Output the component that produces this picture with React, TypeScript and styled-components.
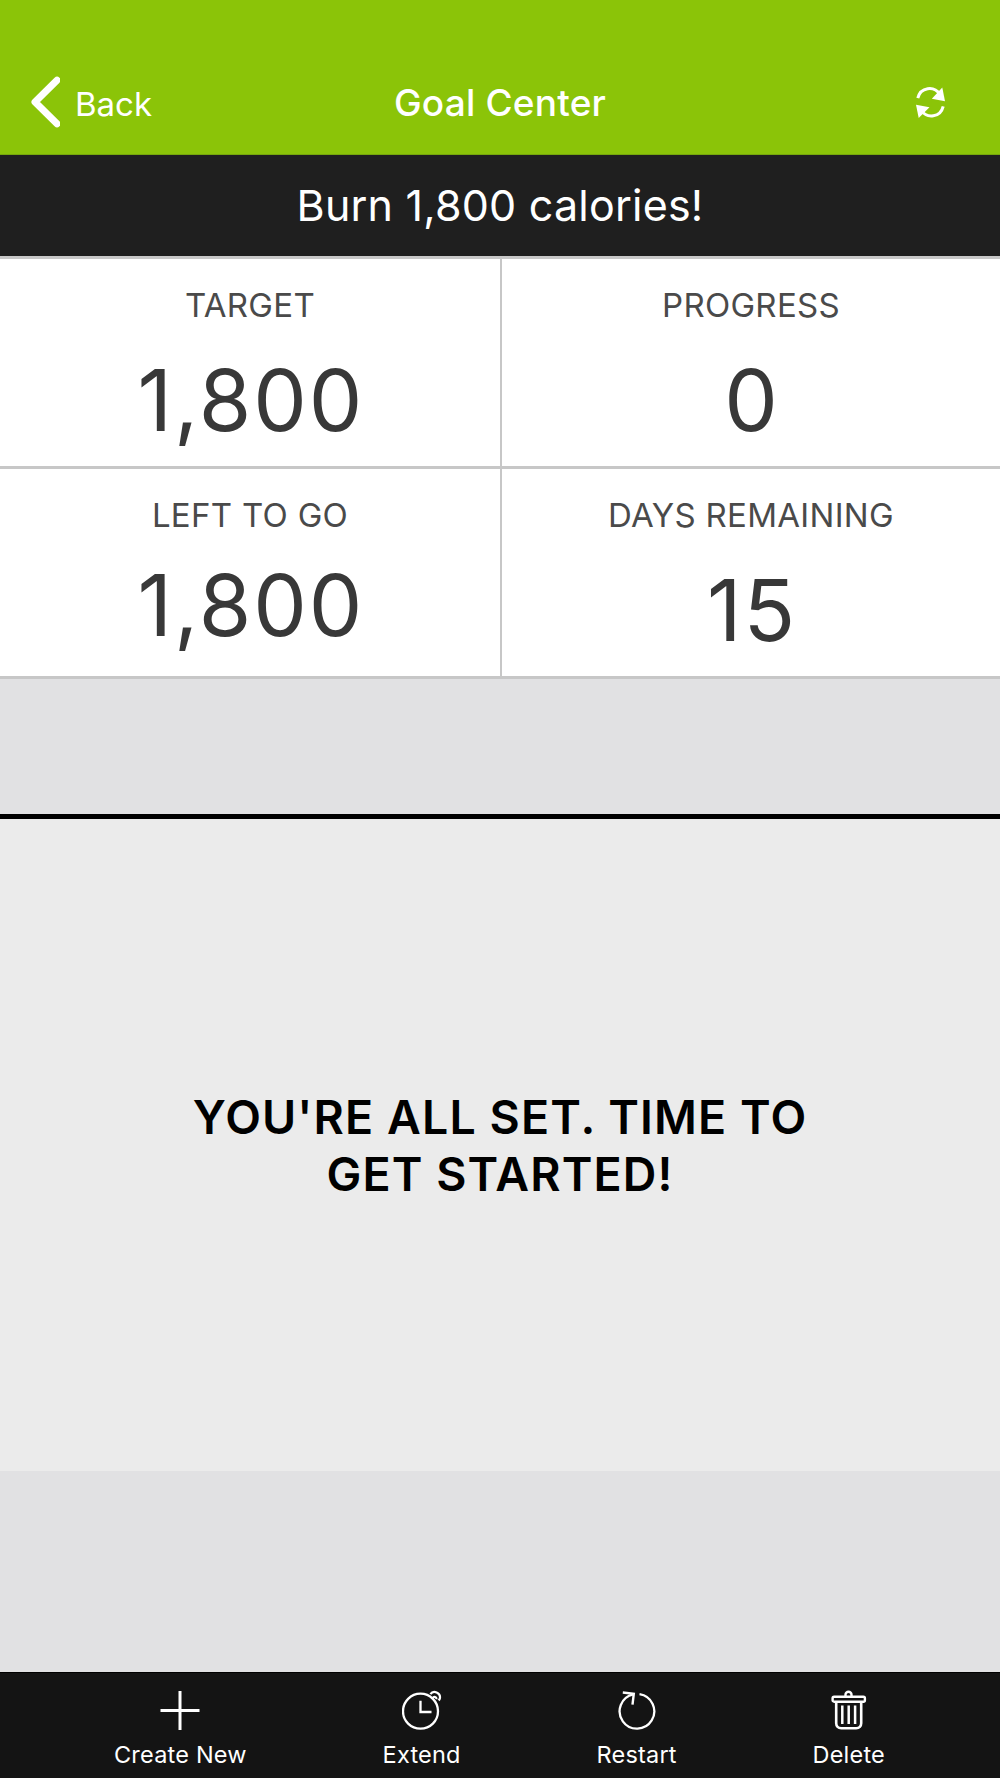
import React from "react";
import styled, { createGlobalStyle } from "styled-components";

interface IStat {
  label: string;
  value: string;
  raised?: boolean;
}

const stats: IStat[] = [
  { label: "TARGET", value: "1,800" },
  { label: "PROGRESS", value: "0" },
  { label: "LEFT TO GO", value: "1,800", raised: true },
  { label: "DAYS REMAINING", value: "15" },
];

function ChevronIcon() {
  return (
    <svg width="30" height="52" viewBox="0 0 30 52" fill="none">
      <path
        d="M27 4.200 5 26l22 21.800"
        stroke="#fff"
        strokeWidth="7"
        strokeLinecap="round"
        strokeLinejoin="round"
      />
    </svg>
  );
}

function RefreshIcon() {
  return (
    <svg width="30" height="32" viewBox="0 0 30 32" fill="none">
      <path d="M1.800 12.200C4.500 1 18 -.5 24 8.500" stroke="#fff" strokeWidth="3" />
      <path d="M26.300 1.500 29 15.200 15.800 12.700Z" fill="#fff" />
      <path d="M27.200 20.300C24.500 31.500 11 33 5 24" stroke="#fff" strokeWidth="3" />
      <path d="M0 18.800 13.500 21.300 2.700 32Z" fill="#fff" />
    </svg>
  );
}

function PlusIcon() {
  return (
    <svg width="40" height="40" viewBox="0 0 40 40">
      <path d="M20 1v39M.5 20.500h39" stroke="#fff" strokeWidth="3" />
    </svg>
  );
}

function ClockIcon() {
  return (
    <svg width="40" height="40" viewBox="0 0 40 40" fill="none" stroke="#fff">
      <circle cx="18.500" cy="21.200" r="17.500" strokeWidth="2.300" />
      <path d="M18.500 10.700v11.300h11" strokeWidth="2.300" />
      <path
        d="M28.400 4.200c3-4.500 10.500-1.500 9.500 4-.2 1-.6 1.500-1.300 2.200M30.700 8.300c1-2.200 4.300-1.500 3.600 1"
        strokeWidth="2.200"
      />
    </svg>
  );
}

function RestartIcon() {
  return (
    <svg width="40" height="40" viewBox="0 0 40 40" fill="none" stroke="#fff">
      <path d="M22.500 4.200A17.300 17.300 0 1 1 16.300 4.400" strokeWidth="2.300" />
      <path d="M5.800 2.500l11 1.200-1.300 11" strokeWidth="2.400" />
    </svg>
  );
}

function TrashIcon() {
  return (
    <svg width="36" height="40" viewBox="0 0 36 40" fill="none" stroke="#fff">
      <path d="M14.500 6.300V4.800a3 3 0 0 1 6 0V6.300" strokeWidth="2.400" />
      <rect x="1.600" y="6.700" width="32.300" height="5" rx="1.500" strokeWidth="2.400" />
      <path d="M5.200 12v21.300c0 3 2 5 5 5h15c3 0 5-2 5-5V12" strokeWidth="2.600" />
      <path d="M11.300 15.500v18.500M17.700 15.500v18.500M24.100 15.500v18.500" strokeWidth="2.500" />
    </svg>
  );
}

function App() {
  return (
    <Screen>
      <GlobalStyle />
      <Header>
        <BackButton>
          <ChevronIcon />
          <BackText>Back</BackText>
        </BackButton>
        <Title>Goal Center</Title>
        <RefreshButton aria-label="Refresh">
          <RefreshIcon />
        </RefreshButton>
      </Header>
      <GoalName>Burn 1,800 calories!</GoalName>
      <Stats>
        {stats.map((stat) => (
          <Stat key={stat.label}>
            <StatLabel>{stat.label}</StatLabel>
            <StatValue $raised={stat.raised}>{stat.value}</StatValue>
          </Stat>
        ))}
      </Stats>
      <Spacer />
      <Message>
        YOU'RE ALL SET. TIME TO
        <br />
        GET STARTED!
      </Message>
      <Toolbar>
        <ToolbarItem>
          <PlusIcon />
          <ToolbarText>Create New</ToolbarText>
        </ToolbarItem>
        <ToolbarItem>
          <ClockIcon />
          <ToolbarText>Extend</ToolbarText>
        </ToolbarItem>
        <ToolbarItem>
          <RestartIcon />
          <ToolbarText>Restart</ToolbarText>
        </ToolbarItem>
        <ToolbarItem>
          <TrashIcon />
          <ToolbarText>Delete</ToolbarText>
        </ToolbarItem>
      </Toolbar>
    </Screen>
  );
}

export default App;

const GlobalStyle = createGlobalStyle`
  * {
    box-sizing: border-box;
  }
  body {
    margin: 0;
    font-family: Inter, "Liberation Sans", sans-serif;
  }
  button {
    padding: 0;
    border: 0;
    background: none;
    color: inherit;
    font: inherit;
  }
  svg {
    display: block;
  }
`;

const Screen = styled.main`
  display: flex;
  flex-direction: column;
  width: 1000px;
  height: 1778px;
  background: #e1e1e3;
`;

const Header = styled.header`
  display: grid;
  grid-template-columns: 1fr auto 1fr;
  align-items: center;
  height: 155px;
  padding: 50px 54px 0 30px;
  background: #8bc408;
  border-bottom: 1px solid #76a80c;
  color: #fff;
`;

const BackButton = styled.button`
  display: flex;
  align-items: center;
  gap: 15px;
`;

const BackText = styled.span`
  padding-top: 3px;
  font-size: 33px;
  font-weight: 400;
  line-height: 40px;
`;

const Title = styled.h1`
  margin: 0 0 0 24px;
  padding-top: 2px;
  font-size: 37px;
  font-weight: 500;
  line-height: 44px;
  letter-spacing: 0.2px;
`;

const RefreshButton = styled.button`
  justify-self: end;
`;

const GoalName = styled.h2`
  margin: 0;
  height: 101px;
  background: #1f1f1f;
  color: #fff;
  font-size: 43px;
  font-weight: 400;
  line-height: 101px;
  letter-spacing: 0.22px;
  text-align: center;
`;

const Stats = styled.section`
  display: grid;
  grid-template-columns: 500px 498px;
  grid-template-rows: 207px 207px;
  gap: 3px 2px;
  padding: 3px 0;
  background: #c7c7c7;
`;

const Stat = styled.div`
  display: flex;
  flex-direction: column;
  align-items: center;
  padding-top: 26px;
  background: #fff;
`;

const StatLabel = styled.span`
  color: #4a4a4a;
  font-size: 33px;
  font-weight: 380;
  line-height: 40px;
  letter-spacing: 0.3px;
`;

const StatValue = styled.span<{ $raised?: boolean }>`
  margin-top: ${({ $raised }) => ($raised ? "21px" : "26px")};
  color: #383838;
  font-size: 85px;
  line-height: 100px;
  letter-spacing: 2px;
  text-indent: 2px;
`;

const Spacer = styled.div`
  height: 135px;
`;

const Message = styled.p`
  margin: 0;
  height: 657px;
  padding-top: 270px;
  border-top: 5px solid #000;
  background: #ebebeb;
  color: #000;
  font-size: 46.500px;
  font-weight: 600;
  line-height: 57px;
  letter-spacing: 1.100px;
  text-align: center;
`;

const Toolbar = styled.nav`
  display: flex;
  justify-content: space-between;
  height: 106px;
  margin-top: auto;
  padding: 17px 115px 0 114px;
  border-top: 1px solid #000;
  background: #141414;
  color: #fff;
`;

const ToolbarItem = styled.button`
  display: flex;
  flex-direction: column;
  align-items: center;
  gap: 10px;
`;

const ToolbarText = styled.span`
  font-size: 23.500px;
  line-height: 30px;
  letter-spacing: 0.200px;
`;
